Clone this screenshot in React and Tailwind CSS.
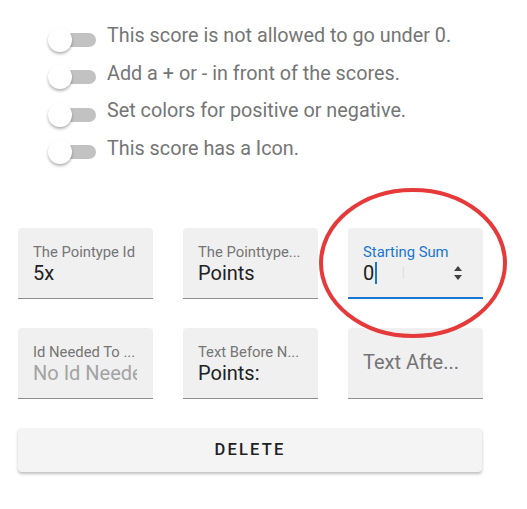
import React from 'react';

const toggles = [
  'This score is not allowed to go under 0.',
  'Add a + or - in front of the scores.',
  'Set colors for positive or negative.',
  'This score has a Icon.',
];

const Toggle = ({ text }) => (
  <div className="flex h-[37.5px] items-center">
    <div className="relative ml-[48px] h-[24px] w-[48px] shrink-0">
      <div className="absolute left-[4px] top-[5px] h-[14px] w-[44px] rounded-full bg-[#c2c2c2]" />
      <div className="absolute left-0 top-0 h-[24px] w-[24px] rounded-full bg-white shadow-[0_2px_3px_rgba(0,0,0,0.3)]" />
    </div>
    <span className="mb-[7px] ml-[11px] whitespace-nowrap text-[19.8px] leading-[24px] text-[#757575]">{text}</span>
  </div>
);

const Field = ({ label, value, placeholder }) => (
  <div className="h-[71px] w-[135px] rounded-t-[4px] border-b border-[#8f8f8f] bg-[#f0f0f0] px-[15px] pt-[16px]">
    <div className="truncate text-[14.8px] leading-[17px] text-[#757575]">{label}</div>
    {placeholder ? (
      <div className="w-[104px] overflow-hidden whitespace-nowrap text-[20px] leading-[24px] text-[#a3a3a3]">{placeholder}</div>
    ) : (
      <div className="text-[20px] leading-[24px] text-[#212121]">{value}</div>
    )}
  </div>
);

export default function App() {
  return (
    <div className="relative h-[509px] w-[527px] bg-white font-['Roboto',sans-serif]">
      <div className="pt-[21px]">
        {toggles.map((t) => (
          <Toggle key={t} text={t} />
        ))}
      </div>

      <div className="mt-[57px] flex flex-col gap-[29px] px-[18px]">
        <div className="flex gap-[30px]">
          <Field label="The Pointype Id" value="5x" />
          <Field label="The Pointtype..." value="Points" />
          <div className="h-[71px] w-[135px] rounded-t-[4px] border-b-2 border-[#1976d2] bg-[#f0f0f0] px-[15px] pt-[16px]">
            <div className="text-[14.8px] leading-[17px] text-[#1976d2]">Starting Sum</div>
            <div className="flex items-center text-[20px] leading-[24px] text-[#212121]">
              <span>0</span>
              <span className="ml-[1px] h-[22px] w-[2px] bg-[#1976d2]" />
              <span className="ml-[24px] text-[15px] font-light text-[#dcdcdc]">I</span>
              <svg className="ml-auto mr-[5px]" width="10" height="16" viewBox="0 0 10 16">
                <path d="M1 6 L5 1 L9 6 Z" fill="#424242" />
                <path d="M1 10 L5 15 L9 10 Z" fill="#424242" />
              </svg>
            </div>
          </div>
        </div>
        <div className="flex gap-[30px]">
          <Field label="Id Needed To ..." placeholder="No Id Needed" />
          <Field label="Text Before N..." value="Points:" />
          <div className="h-[71px] w-[135px] rounded-t-[4px] border-b border-[#8f8f8f] bg-[#f0f0f0] px-[15px] pt-[22px]">
            <div className="text-[20px] leading-[24px] text-[#757575]">Text Afte...</div>
          </div>
        </div>
        <button className="h-[44px] w-[464px] rounded-[4px] bg-[#f4f4f4] text-[16.5px] font-medium tracking-[2.2px] text-[#212121] shadow-[0_2px_3px_rgba(0,0,0,0.25)]">
          DELETE
        </button>
      </div>

      <svg className="pointer-events-none absolute left-0 top-0" width="527" height="509">
        <ellipse cx="413" cy="263" rx="92" ry="73" fill="none" stroke="#e63a3a" strokeWidth="4" />
      </svg>
    </div>
  );
}
